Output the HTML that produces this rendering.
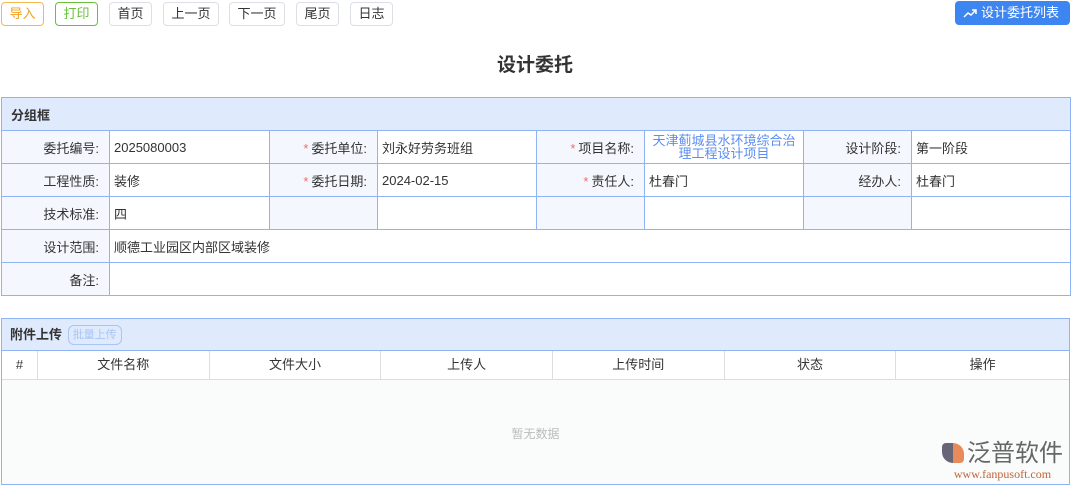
<!DOCTYPE html>
<html><head><meta charset="utf-8"><style>
*{box-sizing:border-box;margin:0;padding:0}
body{width:1074px;height:489px;background:#fff;font-family:"Liberation Sans","Noto Sans CJK SC",sans-serif;font-size:13px;color:#333;position:relative;overflow:hidden}
.b{position:absolute;top:2px;height:24px;border:1px solid #dcdfe6;border-radius:4px;background:#fff;font-size:13px;line-height:22px;text-align:center;color:#333}
.title{position:absolute;top:50px;left:-2px;width:1074px;text-align:center;font-size:19px;font-weight:bold;color:#333}
table{border-collapse:collapse;position:absolute;left:1px;table-layout:fixed}
td{border:1px solid #8fb3f5;height:33px;padding:0 4px}
.l{background:#f4f7fd;text-align:right;padding-right:10px}
.h{background:#dfeafd;font-weight:bold;text-align:left;padding-left:9px}
.s{color:#f56c6c;margin-right:3px}
.box{position:absolute;left:1px;top:318px;width:1069px;height:167px;border:1px solid #8fb3f5;background:#fafcfc}
.ah{height:32px;background:#dfeafd;border-bottom:1px solid #8fb3f5;font-weight:bold;line-height:32px;padding-left:8px}
.th{display:flex;height:29px;background:#fff;border-bottom:1px solid #ddd}
.th div{border-right:1px solid #ddd;text-align:center;line-height:28px;color:#333}
</style></head><body>
<div class="b" style="left:1px;width:43px;border-color:#f5b84f;color:#f0a020">导入</div>
<div class="b" style="left:55px;width:43px;border-color:#67c23a;color:#67c23a">打印</div>
<div class="b" style="left:109px;width:43px">首页</div>
<div class="b" style="left:163px;width:56px">上一页</div>
<div class="b" style="left:229px;width:56px">下一页</div>
<div class="b" style="left:296px;width:43px">尾页</div>
<div class="b" style="left:350px;width:43px">日志</div>
<div style="position:absolute;left:955px;top:1px;width:115px;height:24px;background:#3d86f2;border-radius:4px;color:#fff;line-height:24px;font-size:13px;padding-left:8px"><svg width="14" height="10" viewBox="0 0 14 10" style="vertical-align:-1px;margin-right:4px"><path d="M1 9 L5 5 L8 7 L13 2 M9 2 H13 V6" stroke="#fff" stroke-width="1.5" fill="none"/></svg>设计委托列表</div>
<div class="title">设计委托</div>
<table style="top:97px;width:1069px">
<colgroup><col style="width:108px"><col style="width:160px"><col style="width:108px"><col style="width:159px"><col style="width:108px"><col style="width:159px"><col style="width:108px"><col style="width:159px"></colgroup>
<tr><td class="h" colspan="8">分组框</td></tr>
<tr><td class="l">委托编号:</td><td>2025080003</td><td class="l"><span class="s">*</span>委托单位:</td><td>刘永好劳务班组</td><td class="l"><span class="s">*</span>项目名称:</td><td style="color:#5a8ef0;text-align:center;line-height:13px;font-size:13px">天津蓟城县水环境综合治理工程设计项目</td><td class="l">设计阶段:</td><td>第一阶段</td></tr>
<tr><td class="l">工程性质:</td><td>装修</td><td class="l"><span class="s">*</span>委托日期:</td><td>2024-02-15</td><td class="l"><span class="s">*</span>责任人:</td><td>杜春门</td><td class="l">经办人:</td><td>杜春门</td></tr>
<tr><td class="l">技术标准:</td><td>四</td><td class="l"></td><td></td><td class="l"></td><td></td><td class="l"></td><td></td></tr>
<tr><td class="l">设计范围:</td><td colspan="7">顺德工业园区内部区域装修</td></tr>
<tr><td class="l">备注:</td><td colspan="7"></td></tr>
</table>
<div class="box">
<div class="ah">附件上传 <span style="display:inline-block;margin-left:2px;height:20px;line-height:18px;border:1px solid #a8c5f5;border-radius:6px;color:#a8c5f5;font-weight:normal;font-size:11px;padding:0 4px;vertical-align:1px">批量上传</span></div>
<div class="th"><div style="width:36px">#</div><div style="width:172px">文件名称</div><div style="width:172px">文件大小</div><div style="width:172px">上传人</div><div style="width:172px">上传时间</div><div style="width:172px">状态</div><div style="width:173px;border:none">操作</div></div>
<div style="text-align:center;color:#bbb;margin-top:45px;font-size:12px">暂无数据</div>
<div style="position:absolute;right:6px;bottom:3px;text-align:center">
<div style="font-size:24px;color:#666;line-height:28px"><span style="display:inline-block;width:22px;height:20px;background:linear-gradient(90deg,#667 50%,#e98a5a 50%);border-radius:4px 11px 4px 11px;margin-right:3px;vertical-align:-2px"></span>泛普软件</div>
<div style="font-size:12px;color:#c0643a;font-family:'Liberation Serif',serif;line-height:13px">www.fanpusoft.com</div></div>
</div>
</body></html>
